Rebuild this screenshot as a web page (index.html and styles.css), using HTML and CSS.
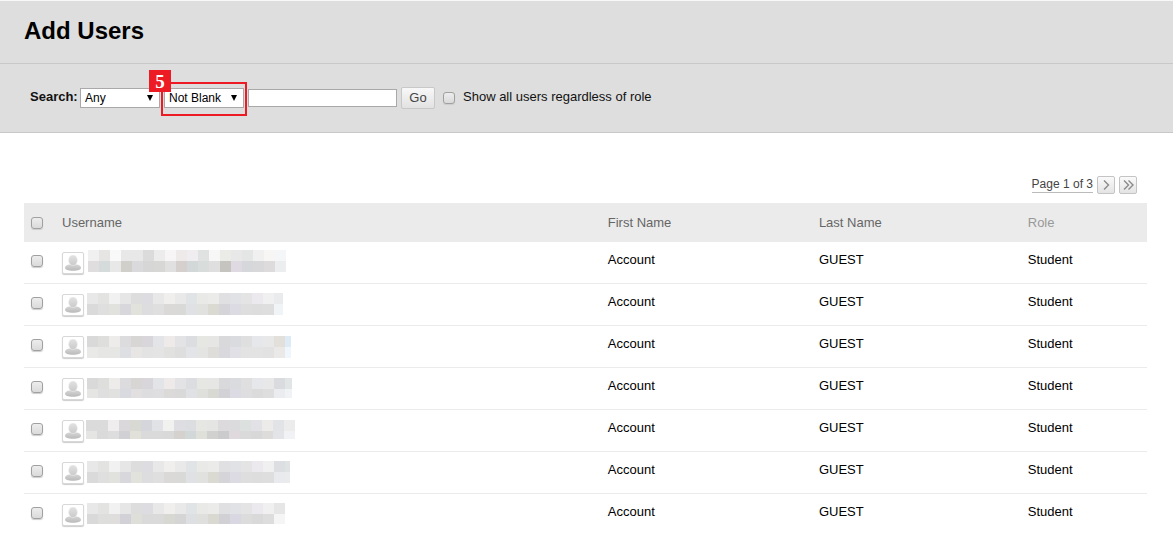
FILE: index.html
```html
<!DOCTYPE html>
<html lang="en">
<head>
<meta charset="utf-8">
<title>Add Users</title>
<link rel="stylesheet" href="styles.css">
</head>
<body>
<svg class="defs" aria-hidden="true">
  <defs>
    <linearGradient id="person" x1="0" y1="0" x2="0" y2="1">
      <stop offset="0" stop-color="#e2e2e2"/><stop offset="1" stop-color="#cacaca"/>
    </linearGradient>
    <linearGradient id="torso" x1="0" y1="0" x2="0" y2="1">
      <stop offset="0" stop-color="#d6d6d6"/><stop offset="1" stop-color="#b9b9b9"/>
    </linearGradient>
    <symbol id="avatar" viewBox="0 0 16 16">
      <path d="M0 13c0-2 2.500-3.500 5-3.500h6c2.500 0 5 1.500 5 3.500 0 1.500-3 2.800-8 2.800S0 14.500 0 13z" fill="url(#torso)"/>
      <ellipse cx="8" cy="5.300" rx="4.400" ry="5.300" fill="url(#person)" stroke="#eee" stroke-width=".5"/>
    </symbol>
  </defs>
</svg>
<header class="title-bar"><h1>Add Users</h1></header>
<form class="search">
  <label class="search-label" for="field">Search:</label>
  <span class="select"><select id="field"><option>Any</option></select></span>
  <span class="select marked"><select aria-label="Condition"><option>Not Blank</option></select><span class="step">5</span></span>
  <input class="query" type="text" aria-label="Search text">
  <button class="go" type="button">Go</button>
  <input class="check" type="checkbox" id="all">
  <label class="all-label" for="all">Show all users regardless of role</label>
</form>
<main>
  <nav class="pager">
    <a class="page" href="#">Page 1 of 3</a>
    <button type="button" aria-label="Next page"><svg viewBox="0 0 16 16"><path d="M6 3.500l4.500 4.500-4.500 4.500"/></svg></button>
    <button type="button" aria-label="Last page"><svg viewBox="0 0 16 16"><path d="M4 3.500l4.500 4.500-4.500 4.500M8.500 3.500l4.500 4.500-4.500 4.500"/></svg></button>
  </nav>
  <table>
    <colgroup><col class="c-check"><col class="c-user"><col class="c-first"><col class="c-last"><col></colgroup>
    <thead>
      <tr><th><input class="check" type="checkbox" aria-label="Select all"></th><th>Username</th><th>First Name</th><th>Last Name</th><th class="muted">Role</th></tr>
    </thead>
    <tbody id="users"></tbody>
  </table>
</main>
<script src="script.js"></script>
</body>
</html>
```
FILE: styles.css
```css
* { box-sizing: border-box; }
body {
  margin: 0;
  background: #fff;
  color: #000;
  font: 13px/16px "Liberation Sans", Arial, sans-serif;
}
.defs { position: absolute; width: 0; height: 0; }
.title-bar {
  padding: 16px 24px 19px;
  background: #dedede;
  border-top: 1px solid #f8f8f8;
  border-bottom: 1px solid #c8c8c8;
}
h1 { margin: 0; font-size: 24px; line-height: 27px; }
.search {
  display: flex;
  align-items: center;
  height: 69px;
  padding: 0 30px 1px;
  background: #dedede;
  border-bottom: 1px solid #c8c8c8;
}
.search-label { width: 50px; font-weight: bold; color: #111; padding-bottom: 2px; }
.select { position: relative; width: 80px; height: 20px; margin-right: 4px; }
.select select {
  display: block;
  width: 100%;
  height: 100%;
  padding: 0 4px;
  appearance: none;
  background: #fff;
  border: 1px solid #a9a9a9;
  border-radius: 0;
  color: #000;
  font: 12px "Liberation Sans", Arial, sans-serif;
}
.select::after {
  content: "";
  position: absolute;
  right: 7px;
  top: 7px;
  border: solid transparent;
  border-width: 6px 3px 0;
  border-top-color: #000;
  pointer-events: none;
}
.marked::before {
  content: "";
  position: absolute;
  inset: -6px -3px -8px;
  border: 2px solid #ed1c24;
  pointer-events: none;
}
.step {
  position: absolute;
  left: -15px;
  top: -18px;
  width: 22px;
  height: 22px;
  background: #ed1c24;
  color: #fff;
  font: bold 19px/24px "Liberation Serif", "Times New Roman", serif;
  text-align: center;
}
.query {
  width: 149px;
  height: 18px;
  padding: 0 2px;
  border: 1px solid #a9a9a9;
  background: #fff;
}
.go {
  width: 34px;
  height: 22px;
  margin: 0 8px 0 4px;
  padding: 0;
  border: 1px solid #c8c8c8;
  border-radius: 2px;
  background: linear-gradient(#f8f8f8, #e2e2e2);
  color: #444;
  font: 13px "Liberation Sans", Arial, sans-serif;
}
.check {
  display: block;
  flex: none;
  width: 12px;
  height: 12px;
  margin: 0;
  appearance: none;
  border: 1px solid #a0a0a0;
  border-radius: 3px;
  background: linear-gradient(#ededed, #dadada);
  box-shadow: 0 1px 1px #ccc;
}
.all-label { margin-left: 8px; padding-bottom: 2px; color: #111; }
main { padding: 42px 26px 0 24px; }
.pager {
  display: flex;
  justify-content: flex-end;
  align-items: center;
  gap: 4px;
  height: 20px;
  margin: 0 10px 8px 0;
}
.page {
  color: #444;
  font-size: 12px;
  line-height: 15px;
  text-decoration: none;
  border-bottom: 1px solid #bbb;
}
.pager button {
  width: 18px;
  height: 18px;
  padding: 0;
  border: 1px solid #c4c4c4;
  border-radius: 2px;
  background: linear-gradient(#fafafa, #e4e4e4);
}
.pager svg { display: block; width: 16px; height: 16px; fill: none; stroke: #8a8a8a; stroke-width: 1.4; }
table { width: 100%; table-layout: fixed; border-collapse: separate; border-spacing: 0; }
.c-check { width: 38px; }
.c-user { width: 48.6%; }
.c-first { width: 18.8%; }
.c-last { width: 18.6%; }
th {
  height: 39px;
  padding: 0;
  background: #ebebeb;
  color: #666;
  font-weight: normal;
  text-align: left;
}
th.muted { color: #999; }
td { height: 42px; padding: 10px 0 0; vertical-align: top; border-bottom: 1px solid #ebebeb; }
tr:last-child td { border-bottom: 0; }
th .check, td .check { margin-left: 7px; }
td .check { margin-top: 3px; }
.user { display: flex; margin-top: -2px; }
.avatar {
  width: 22px;
  height: 22px;
  margin: 2px 2px 0 0;
  padding: 2px;
  border: 1px solid #d8d8d8;
  border-radius: 2px;
  background: #fff;
  box-shadow: 0 1px 1px #ccc;
}
.name { display: block; width: 212px; height: 25px; shape-rendering: crispEdges; }
```
FILE: script.js
```js
// Masked user names: x, y, width, height, then the two rows of 11px tiles.
const names = [
  [2, 0, 198, 22,
    "f0f0f0 e7e5e4 f9f9f9 e8e8e8 e8e8e8 dbdbdb ececec f7f5f6 eeeaea efedef dfe2e1 f7f7f7 ebebe8 e8e8e8 e4e6e5 f0f0f0 f8f6f4 f5f6f8",
    "dfdddd d5dada e8e8e8 d0cfc9 dadadc d6d6d7 d7d7d5 e0e0e1 d5d0cd d2d7d7 d8dddb dfdfdf c5c4be dfd9e1 d5d7da d8d8da dddbdb ebedef"],
  [1, 1, 196, 22,
    "e8e8e9 e3e3e2 f1f1f1 e6e6e7 dedddd dddce0 e8e8e9 f0efed e9e9ea e1e4e7 e9e9e8 ebebe9 e0dfe2 e1e2e6 e4e4e5 ebe9ed f0f0f1 e9ebec",
    "dadadb dfdfdf e1e1de d7d7dc e1e2db dddddf dfdfe0 dbd9d7 d9d9d8 dfe1e4 e1e1df dadad3 d5d4d9 dcdae3 dedede dddddd dedede f0f4f6"],
  [1, 2, 204, 22,
    "d9d9da dededd edecea dcdcde d8d6d5 d8d6da e3e4e8 eeeaea e3e3e6 dcdde1 e6e6e3 e6e6e4 d9d9db dadbdf dfdfdf e6e7eb e8e8e9 e3dfdb deeaf5",
    "e9e9e8 e6e6e5 e6e6e4 dedfe3 e8e6e5 e3e3e3 e4e4e4 e1e1df dedede e3e4e8 e4e4e3 deddda d9d8dc e1e0e6 e3e3e4 e3e3e3 e2e2e2 ebe9e8 eff6fc"],
  [1, 2, 205, 20,
    "d9d9da dededd edecea dcdcde d8d6d5 d8d6da e3e4e8 eeeaea e3e3e6 dcdde1 e6e6e3 e6e6e4 d9d9db dadbdf dfdfdf e6e7eb e8e8e9 d9dbde e1e5e6",
    "e5e5e4 dfdfdf e1e1df d8dae0 e1dfdf dddddf dedee0 dbdad8 d9d9d9 dfe1e4 dfe0db d9d9d4 d2d1d5 dcdbe3 dedee0 dbdbdb dedede ebecef f1f2f5"],
  [0, 2, 209, 19,
    "dbdbdc dbdbdb efedee dad8da d9d9d4 d4d6dc e0e2e5 f1f1f0 dedde1 dbdde0 e6e7e3 e5e5e4 dcdadc dbdadc dce0df e2e1e6 edebe9 e2e3e6 ececed",
    "e5e5e4 dadada dddddd d1d0d4 e1e1da dadadb dadadb d9d9da d5d1ce d2d7d7 dfe0da d1d1d0 cbcacc dfd9dd dadadb d8d8d8 dddcdb e2e4e8 f1f2f5"],
  [1, 1, 203, 22,
    "e8e8e9 e3e3e2 f1f1f1 e6e6e7 dedddd dddce0 e8e8e9 f0efed e9e9ea e1e4e7 e9e9e8 ebebe9 e0dfe2 e1e2e6 e4e4e5 ebe9ed f0f0f1 dcdee1 e0e3e3",
    "dadadb dfdfdf e1e1de d7d7dc e1e2db dddddf dfdfe0 dbd9d7 d9d9d8 dfe1e4 e1e1df dadad3 d5d4d9 dcdae3 dedede dddddd dedede e8eaed e9ebed"],
  [1, 1, 198, 21,
    "e8e8e9 e3e3e2 f1f1f1 e6e6e7 dedddd dddce0 e8e8e9 f0efed e9e9ea e1e4e7 e9e9e8 ebebe9 e0dfe2 e1e2e6 e4e4e5 ebe9ed f0f0f1 e6e6e7",
    "d9d9da dededd dfdedc d2d1d8 dfdfd9 dadadb dadadb d8d8d3 d5d5d5 dedfe3 dfdfdd d9d9d1 d1d0d4 d9d8e2 dcdcdc d9d9d9 dddddd f5f5f5"]
];

function mosaic([x, y, w, h, ...rows]) {
  const tiles = rows.map((row, r) => row.split(" ").map((color, i) => {
    const tw = Math.min(11, w - i * 11);
    const th = r ? h - 11 : 11;
    return `<rect x="${x + i * 11}" y="${y + r * 11}" width="${tw}" height="${th}" fill="#${color}"/>`;
  }).join("")).join("");
  return `<svg class="name" aria-hidden="true">${tiles}</svg>`;
}

document.getElementById("users").innerHTML = names.map(name => `
  <tr>
    <td><input class="check" type="checkbox" aria-label="Select user"></td>
    <td><div class="user"><svg class="avatar"><use href="#avatar"/></svg>${mosaic(name)}</div></td>
    <td>Account</td><td>GUEST</td><td>Student</td>
  </tr>`).join("");
```
